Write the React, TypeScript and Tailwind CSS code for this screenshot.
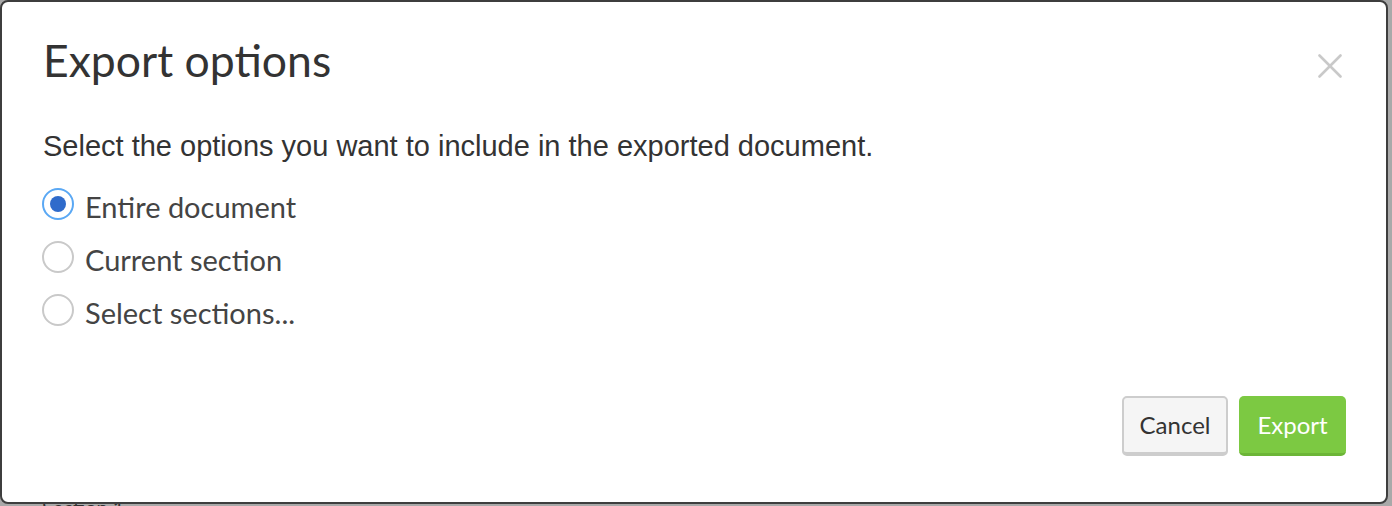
import { useState } from "react";

const OPTIONS = [
  { value: "entire", label: "Entire document" },
  { value: "current", label: "Current section" },
  { value: "select", label: "Select sections..." },
];

function Radio({ checked }: { checked: boolean }) {
  if (checked) {
    return (
      <span className="flex items-center justify-center w-[32px] h-[32px] rounded-full border-2 border-[#5aa8f4] bg-white mb-[5px] shrink-0">
        <span className="w-[16px] h-[16px] rounded-full bg-[#2f6bcb]" />
      </span>
    );
  }
  return (
    <span className="w-[32px] h-[32px] rounded-full border-2 border-[#c9c9c9] bg-white mb-[5px] shrink-0" />
  );
}

export default function App() {
  const [selected, setSelected] = useState("entire");

  return (
    <div className="relative w-[1392px] h-[506px] overflow-hidden bg-[#a9a9a9]">
      {/* page behind the dialog */}
      <div className="pt-[492px] pl-[42px] text-[20px] text-[#333] font-['Lato','Liberation_Sans',sans-serif]">
        Section 1
      </div>

      {/* dialog */}
      <div className="absolute left-0 top-0 w-[1388px] h-[504px] flex flex-col bg-white border-2 border-[#3e3e3e] rounded-[8px] font-['Lato','Liberation_Sans',sans-serif]">
        <div className="flex justify-between items-start pt-[32px] pl-[41px] pr-[44px]">
          <h2 className="text-[44.5px] leading-[52px] text-[#333]">Export options</h2>
          <button type="button" className="mt-[20px] text-[#c9c9c9]" aria-label="Close">
            <svg width="24" height="24" viewBox="0 0 24 24" fill="none" stroke="currentColor" strokeWidth="2.6" strokeLinecap="round">
              <line x1="1.5" y1="1.5" x2="22.5" y2="22.5" />
              <line x1="22.5" y1="1.5" x2="1.5" y2="22.5" />
            </svg>
          </button>
        </div>

        <p className="mt-[42px] pl-[41px] text-[29px] leading-[36px] text-[#333] font-['Liberation_Sans',Arial,sans-serif]">
          Select the options you want to include in the exported document.
        </p>

        <div className="mt-[16px] pl-[40px] flex flex-col">
          {OPTIONS.map((option) => (
            <label
              key={option.value}
              onClick={() => setSelected(option.value)}
              className="flex items-center gap-[11px] h-[53px] cursor-pointer"
            >
              <Radio checked={selected === option.value} />
              <span className="text-[29px] leading-[53px] text-[#444]">{option.label}</span>
            </label>
          ))}
        </div>

        <div className="mt-auto flex justify-end gap-[11px] pr-[40px] pb-[46px]">
          <button
            type="button"
            className="w-[106px] h-[60px] rounded-[5px] bg-[#f5f5f5] border-2 border-b-[4px] border-[#cdcdcd] text-[24px] text-[#333]"
          >
            Cancel
          </button>
          <button
            type="button"
            className="w-[107px] h-[60px] rounded-[5px] bg-[#7cc942] border-b-[3px] border-[#6cb537] text-[24px] text-white"
          >
            Export
          </button>
        </div>
      </div>
    </div>
  );
}
